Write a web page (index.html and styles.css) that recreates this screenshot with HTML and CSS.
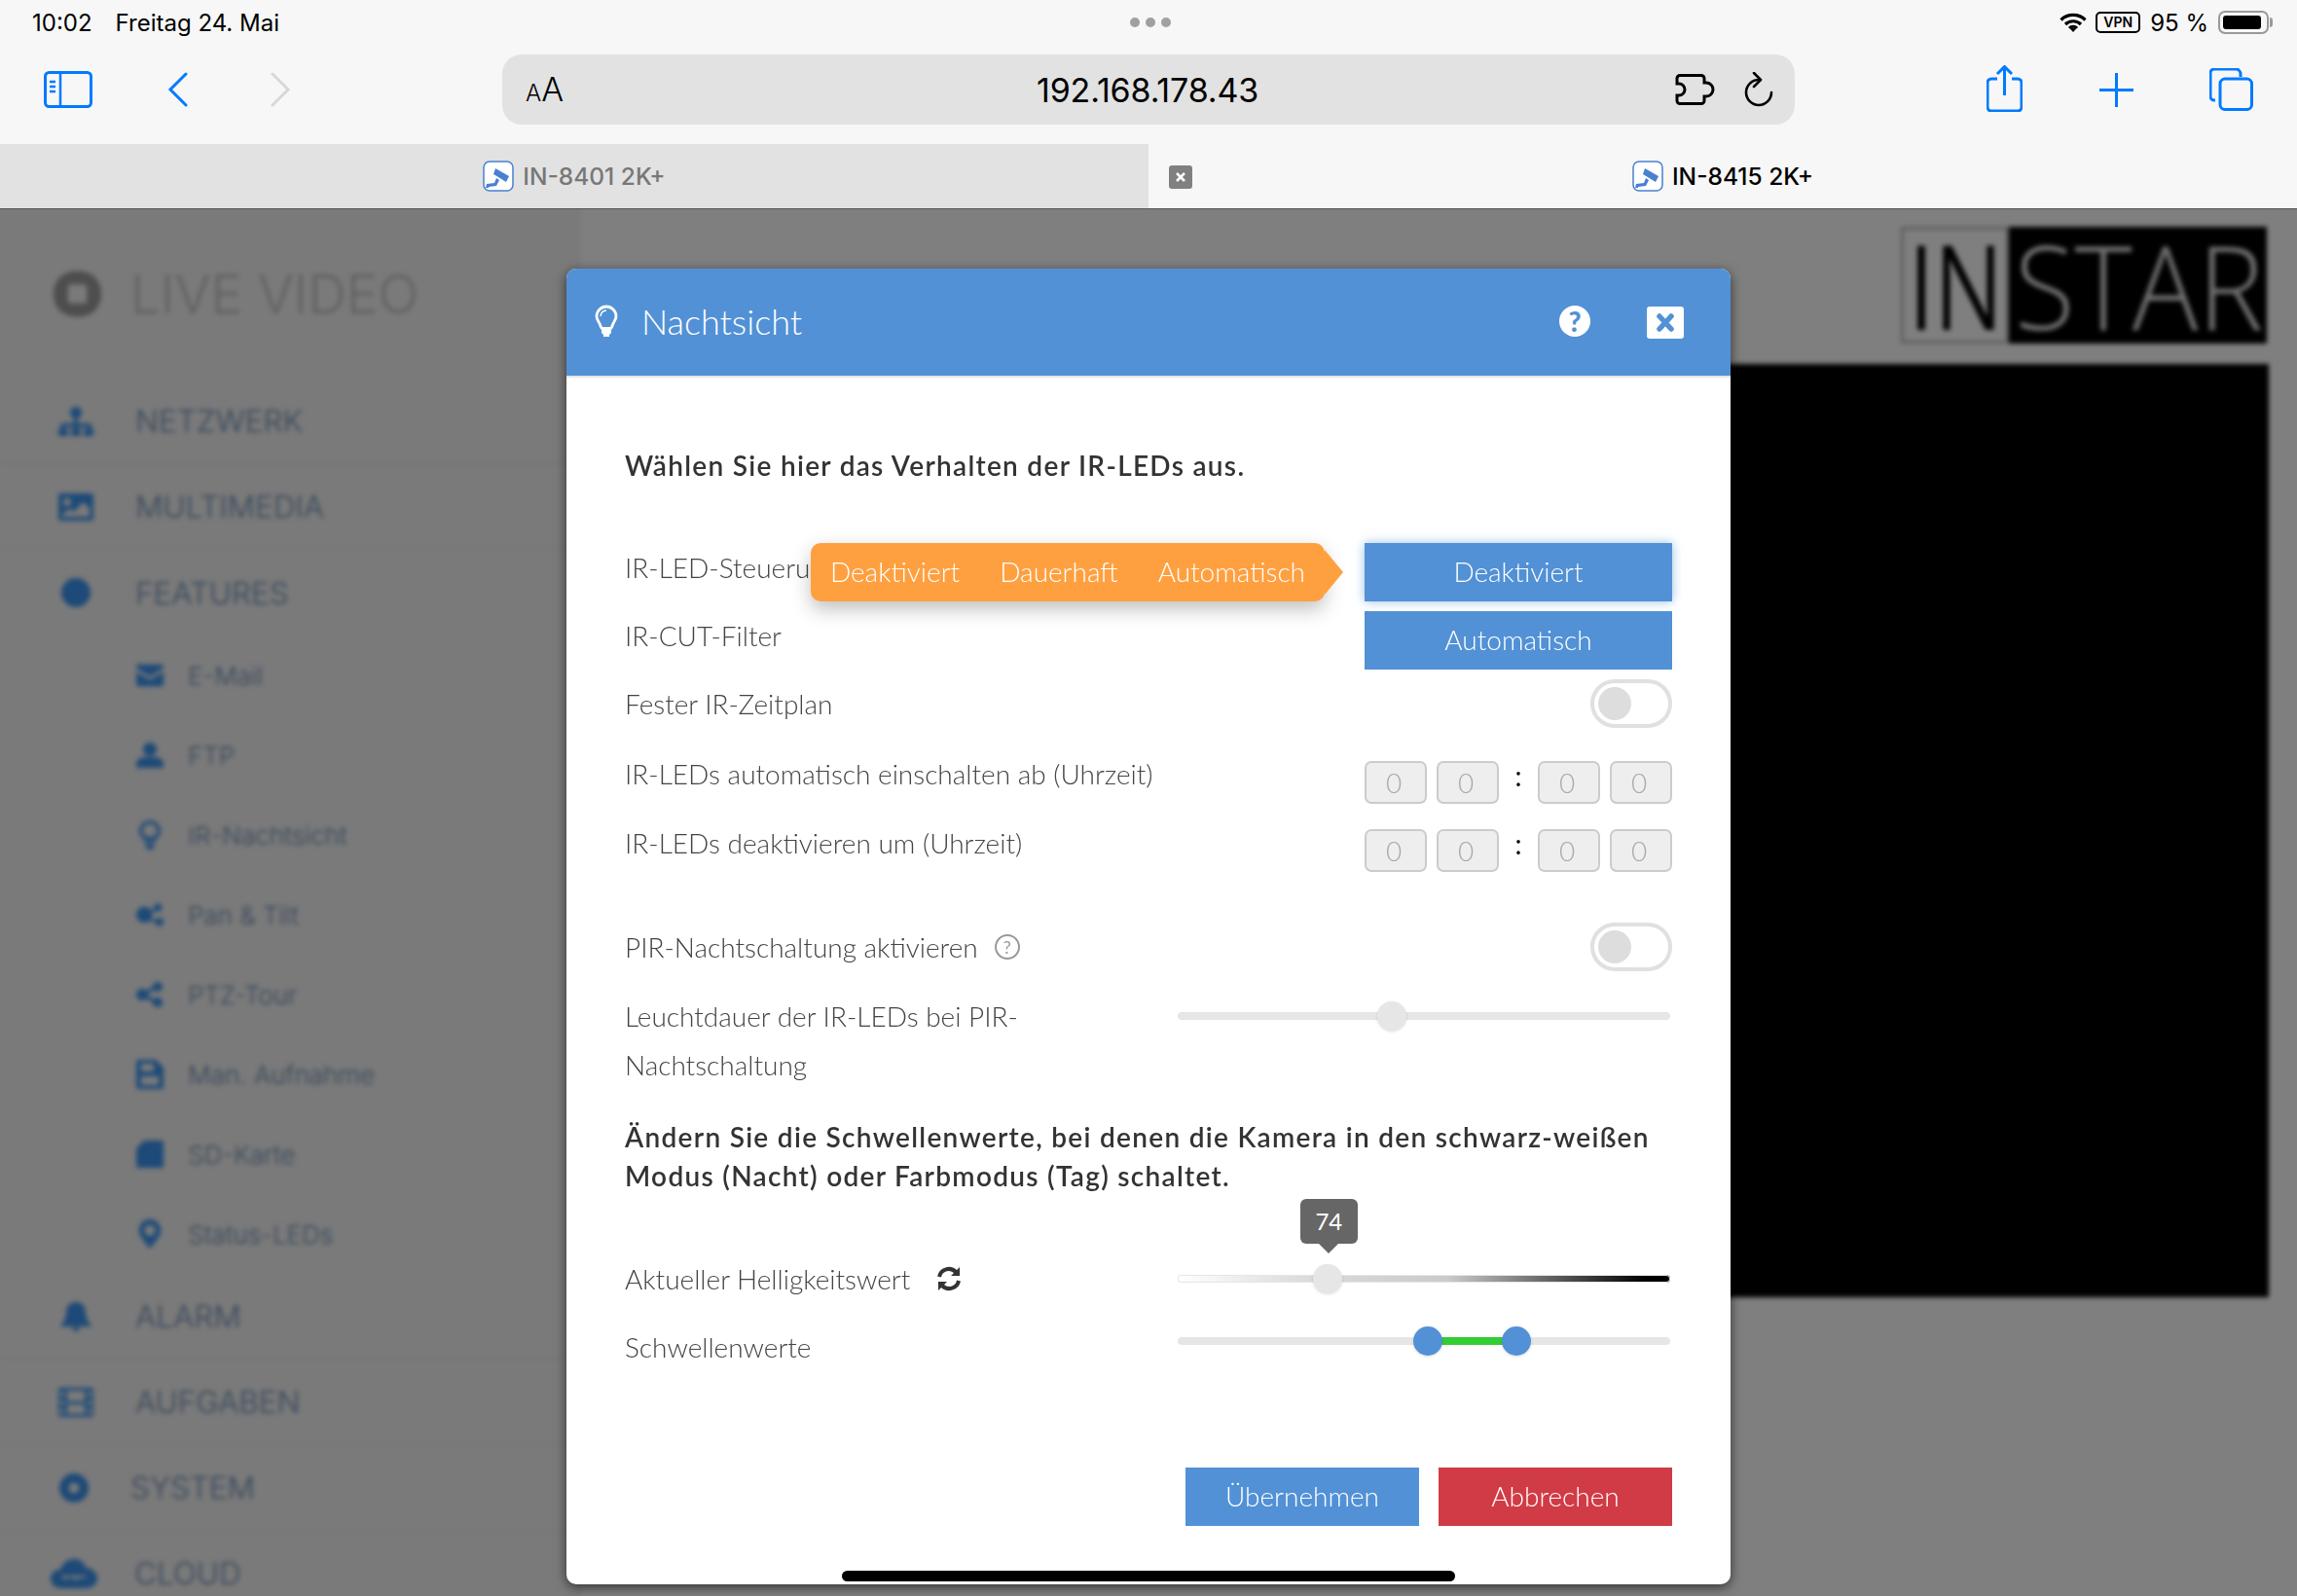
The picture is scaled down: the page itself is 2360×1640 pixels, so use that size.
FILE: index.html
```html
<!DOCTYPE html>
<html lang="de">
<head>
  <meta charset="UTF-8" />
  <title>Nachtsicht</title>
  <link rel="stylesheet" href="styles.css">
</head>
<body>
  <!-- Safari chrome -->
  <header class="chrome">
    <div class="statusbar">
      <div class="status-left"><span>10:02</span><span>Freitag 24. Mai</span></div>
      <div class="dots"><i></i><i></i><i></i></div>
      <div class="status-right">
        <svg class="wifi" viewBox="0 0 28 20"><path d="M1.5 7.5a18 18 0 0 1 25 0M6 12a11.500 11.500 0 0 1 16 0M10 16a5.500 5.500 0 0 1 8 0" fill="none" stroke="#000" stroke-width="3.200"/><path d="M14 20l-3-3.200a4.500 4.500 0 0 1 6 0z"/></svg>
        <span class="vpn">VPN</span>
        <span class="battery-text">95 %</span>
        <span class="battery"><i></i></span>
      </div>
    </div>
    <div class="toolbar">
      <div class="tool-left">
        <svg class="ic-sidebar" viewBox="0 0 50 38"><rect x="1.500" y="1.500" width="47" height="35" rx="4" fill="none" stroke="#007aff" stroke-width="3"/><path d="M17 2v34" stroke="#007aff" stroke-width="2.500"/><path d="M6 11h6M6 16h6M6 21h6" stroke="#007aff" stroke-width="2.500"/></svg>
        <svg class="ic-chev" viewBox="0 0 21 36"><path d="M19 2L3 18l16 16" fill="none" stroke="#007aff" stroke-width="3" stroke-linecap="round"/></svg>
        <svg class="ic-chev ic-next" viewBox="0 0 21 36"><path d="M2 2l16 16L2 34" fill="none" stroke="#d8d8d8" stroke-width="3" stroke-linecap="round"/></svg>
      </div>
      <div class="addressbar">
        <span class="aa"><small>A</small>A</span>
        <span class="url">192.168.178.43</span>
        <svg class="ic-puzzle" viewBox="0 0 41 32"><path d="M5 1.500H27a3 3 0 0 1 3 3V9h2a7 7 0 0 1 0 14h-2v4.500a3 3 0 0 1-3 3H5a3 3 0 0 1-3-3V22h2a6 6 0 0 0 0-12H2V4.500a3 3 0 0 1 3-3z" fill="none" stroke="#000" stroke-width="3"/></svg>
        <svg class="ic-reload" viewBox="0 0 30 36"><path d="M15 8A13 13 0 1 0 28 21" fill="none" stroke="#000" stroke-width="2.600" stroke-linecap="round"/><path d="M10 1l7 7-7 7" fill="none" stroke="#000" stroke-width="2.600" stroke-linecap="round" stroke-linejoin="round"/></svg>
      </div>
      <div class="tool-right">
        <svg class="ic-share" viewBox="0 0 37 48"><path d="M11 14H5a4 4 0 0 0-4 4v25a4 4 0 0 0 4 4h27a4 4 0 0 0 4-4V18a4 4 0 0 0-4-4h-6M18.500 31V2M11 9l7.500-7.500L26 9" fill="none" stroke="#007aff" stroke-width="3"/></svg>
        <svg class="ic-plus" viewBox="0 0 35 35"><path d="M17.500 0v35M0 17.500h35" stroke="#007aff" stroke-width="3"/></svg>
        <svg class="ic-tabs" viewBox="0 0 45 44"><path d="M6 33H5a4 4 0 0 1-4-4V5a4 4 0 0 1 4-4h22a5 5 0 0 1 5 5v3" fill="none" stroke="#007aff" stroke-width="3"/><rect x="11" y="11" width="32.500" height="31.500" rx="5" fill="none" stroke="#007aff" stroke-width="3"/></svg>
      </div>
    </div>
    <div class="tabs">
      <div class="tab tab-off">
        <svg class="favicon" viewBox="0 0 32 32"><rect x="1" y="1" width="30" height="30" rx="6" fill="#fff" stroke="#4a80d0" stroke-width="1.500"/><path d="M13 8l14 8-3 6-13-8zM4 24l8-1 2-5 3 2-3 6-8 1v1H3z" fill="#4a80d0"/></svg>
        <span>IN-8401 2K+</span>
      </div>
      <div class="tab tab-on">
        <span class="tab-close"><svg viewBox="0 0 24 24"><path d="M8 8l8 8M16 8l-8 8" stroke="#fff" stroke-width="2.500"/></svg></span>
        <svg class="favicon" viewBox="0 0 32 32"><rect x="1" y="1" width="30" height="30" rx="6" fill="#fff" stroke="#4a80d0" stroke-width="1.500"/><path d="M13 8l14 8-3 6-13-8zM4 24l8-1 2-5 3 2-3 6-8 1v1H3z" fill="#4a80d0"/></svg>
        <span>IN-8415 2K+</span>
      </div>
    </div>
  </header>

  <main class="page">
    <!-- Seite hinter dem Dialog -->
    <nav class="sidebar">
      <div class="side-title">
        <svg viewBox="0 0 50 48"><path fill-rule="evenodd" d="M25 0c16 0 25 10 25 24s-9 24-25 24S0 38 0 24 9 0 25 0zM19 14a4 4 0 0 0-4 4v12a4 4 0 0 0 4 4h12a4 4 0 0 0 4-4V18a4 4 0 0 0-4-4z" fill="#9c9c9c"/></svg>
        <span>LIVE VIDEO</span>
      </div>
      <ul class="side-list">
        <li class="side-item"><svg viewBox="0 0 36 30"><circle cx="18" cy="6" r="6"/><path d="M16 10h4v7h11a3 3 0 0 1 3 3v3h2v7H26v-7h4v-2H20v2h3v7H13v-7h3v-2H6v2h4v7H0v-7h2v-3a3 3 0 0 1 3-3h11z"/></svg><span>NETZWERK</span></li>
        <li class="side-item"><svg viewBox="0 0 36 28"><path fill-rule="evenodd" d="M2 0h32a2 2 0 0 1 2 2v24a2 2 0 0 1-2 2H2a2 2 0 0 1-2-2V2a2 2 0 0 1 2-2zM9 5a4 4 0 1 0 0 8 4 4 0 0 0 0-8zM4 24h28V15l-7-6-9 10-4-3-8 5z"/></svg><span>MULTIMEDIA</span></li>
        <li class="side-item"><svg viewBox="0 0 28 28"><circle cx="14" cy="14" r="14"/></svg><span>FEATURES</span></li>
      </ul>
      <ul class="side-sub">
        <li class="sub-item"><svg viewBox="0 0 30 24"><path d="M2 0h26a2 2 0 0 1 2 2v2L15 13 0 4V2a2 2 0 0 1 2-2zM0 8l15 9 15-9v14a2 2 0 0 1-2 2H2a2 2 0 0 1-2-2z"/></svg><span>E-Mail</span></li>
        <li class="sub-item"><svg viewBox="0 0 28 26"><circle cx="14" cy="7" r="7"/><path d="M0 26v-4c0-5 5-7 9-7h10c4 0 9 2 9 7v4z"/></svg><span>FTP</span></li>
        <li class="sub-item"><svg viewBox="0 0 24 34"><path d="M12 0a12 12 0 0 1 7 22v3H5v-3A12 12 0 0 1 12 0zm0 4a8 8 0 0 0-4 15h8a8 8 0 0 0-4-15zM6 27h12l-3 7H9z"/></svg><span>IR-Nachtsicht</span></li>
        <li class="sub-item"><svg viewBox="0 0 34 28"><circle cx="10" cy="14" r="10"/><circle cx="27" cy="5" r="5"/><circle cx="29" cy="23" r="5"/><path d="M12 12l14-8 2 3-14 8zM12 16l15 6-2 3-14-6z"/></svg><span>Pan &amp; Tilt</span></li>
        <li class="sub-item"><svg viewBox="0 0 28 26"><circle cx="6" cy="13" r="6"/><circle cx="22" cy="5" r="5"/><circle cx="22" cy="21" r="5"/><path d="M6 11L21 3l2 3L8 14zM8 12l15 8-2 3L6 15z"/></svg><span>PTZ-Tour</span></li>
        <li class="sub-item"><svg viewBox="0 0 28 30"><path fill-rule="evenodd" d="M2 0h18l8 8v20a2 2 0 0 1-2 2H2a2 2 0 0 1-2-2V2a2 2 0 0 1 2-2zM5 4v8h13V4zM5 17v9h18v-9z"/></svg><span>Man. Aufnahme</span></li>
        <li class="sub-item"><svg viewBox="0 0 28 28"><path d="M8 0h18a2 2 0 0 1 2 2v24a2 2 0 0 1-2 2H2a2 2 0 0 1-2-2V8z"/></svg><span>SD-Karte</span></li>
        <li class="sub-item"><svg viewBox="0 0 24 32"><path fill-rule="evenodd" d="M12 0a12 12 0 0 1 12 12c0 7-12 20-12 20S0 19 0 12A12 12 0 0 1 12 0zm0 6a6 6 0 1 0 0 12 6 6 0 0 0 0-12z"/></svg><span>Status-LEDs</span></li>
      </ul>
      <ul class="side-list">
        <li class="side-item"><svg viewBox="0 0 32 30"><path d="M16 0c7 0 10 5 10 11 0 7 4 10 6 14H0c2-4 6-7 6-14C6 5 9 0 16 0zM12 26h8a4 4 0 0 1-8 0z"/></svg><span>ALARM</span></li>
        <li class="side-item"><svg viewBox="0 0 36 30"><path fill-rule="evenodd" d="M2 0h32a2 2 0 0 1 2 2v26a2 2 0 0 1-2 2H2a2 2 0 0 1-2-2V2a2 2 0 0 1 2-2zM9 3v11h18V3zM9 17v10h18V17zM2 4v5h4V4zm28 0v5h4V4zM2 13v5h4v-5zm28 0v5h4v-5zM2 22v5h4v-5zm28 0v5h4v-5z"/></svg><span>AUFGABEN</span></li>
        <li class="side-item side-item-system"><svg viewBox="0 0 28 28"><path fill-rule="evenodd" d="M14 0a14 14 0 1 1 0 28 14 14 0 0 1 0-28zm0 9a5 5 0 1 0 0 10 5 5 0 0 0 0-10z"/></svg><span>SYSTEM</span></li>
        <li class="side-item side-item-cloud"><svg viewBox="0 0 48 30"><path fill-rule="evenodd" d="M24 0c7 0 11 4 12 9 7 0 12 5 12 11s-5 10-12 10H11C5 30 0 26 0 20s5-9 10-9c2-6 7-11 14-11zM12 20c3 2 6 0 8-2 3 4 8 4 10 1 3 2 6 0 7-2H12z"/></svg><span>CLOUD</span></li>
      </ul>
    </nav>
    <section class="content">
      <div class="logo"><div class="logo-in"><span>IN</span></div><div class="logo-star"><span>STAR</span></div></div>
      <div class="video"></div>
    </section>

    <div class="overlay"></div>

    <!-- Dialog -->
    <div class="modal">
      <div class="modal-head">
        <svg class="ic-bulb" viewBox="0 0 24 34"><path d="M12 2a10 10 0 0 1 10 10c0 4-3 6-4 10-.5 1.500-1 2.500-2 2.500H8c-1 0-1.500-1-2-2.500-1-4-4-6-4-10A10 10 0 0 1 12 2z" fill="none" stroke="#fff" stroke-width="2.800"/><path d="M7 26h10v3l-2 2v2H9v-2l-2-2z" fill="#fff"/><path d="M12 6a6 6 0 0 0-6 6" fill="none" stroke="#fff" stroke-width="1.500"/></svg>
        <h2 class="modal-title">Nachtsicht</h2>
        <span class="head-help">?</span>
        <span class="head-close"><svg viewBox="0 0 38 33"><path d="M13 10l12 13M25 10L13 23" stroke="#5291d6" stroke-width="5.500" stroke-linecap="round"/></svg></span>
      </div>
      <div class="modal-body">
        <p class="intro">Wählen Sie hier das Verhalten der IR-LEDs aus.</p>

        <div class="row row-first">
          <label>IR-LED-Steueru</label>
          <button class="btn-select btn-glow">Deaktiviert</button>
          <div class="popover"><span>Deaktiviert</span><span>Dauerhaft</span><span>Automatisch</span></div>
        </div>
        <div class="row row-tight">
          <label>IR-CUT-Filter</label>
          <button class="btn-select">Automatisch</button>
        </div>
        <div class="row row-tight">
          <label>Fester IR-Zeitplan</label>
          <span class="toggle"></span>
        </div>
        <div class="row row-time1">
          <label>IR-LEDs automatisch einschalten ab (Uhrzeit)</label>
          <div class="time"><span>0</span><span>0</span><b>:</b><span>0</span><span>0</span></div>
        </div>
        <div class="row row-time2">
          <label>IR-LEDs deaktivieren um (Uhrzeit)</label>
          <div class="time"><span>0</span><span>0</span><b>:</b><span>0</span><span>0</span></div>
        </div>
        <div class="row row-pir">
          <label class="label-icon">PIR-Nachtschaltung aktivieren <span class="hint">?</span></label>
          <span class="toggle"></span>
        </div>
        <div class="row row-slider">
          <label class="label-wrap">Leuchtdauer der IR-LEDs bei PIR-Nachtschaltung</label>
          <div class="slider"><div class="track"></div><i class="knob" style="left: 43.5%"></i></div>
        </div>

        <p class="intro intro-two">Ändern Sie die Schwellenwerte, bei denen die Kamera in den schwarz-weißen Modus (Nacht) oder Farbmodus (Tag) schaltet.</p>

        <div class="row row-bright">
          <label class="label-icon">Aktueller Helligkeitswert
            <svg class="ic-refresh" viewBox="0 0 26 26"><path d="M3 11A10 10 0 0 1 20 6M23 15A10 10 0 0 1 6 20" fill="none" stroke="#333" stroke-width="4"/><path d="M24 1v9h-9zM2 25v-9h9z" fill="#333"/></svg>
          </label>
          <div class="slider">
            <div class="track track-grad"></div>
            <i class="knob" style="left: 30.400%"></i>
            <div class="value-tip" style="left: 30.800%">74</div>
          </div>
        </div>
        <div class="row row-thresh">
          <label>Schwellenwerte</label>
          <div class="slider slider-short">
            <div class="track"></div>
            <div class="range" style="left: 50.800%; width: 17.900%"></div>
            <i class="knob knob-blue" style="left: 50.800%"></i>
            <i class="knob knob-blue" style="left: 68.700%"></i>
          </div>
        </div>

        <div class="modal-foot">
          <button class="btn btn-apply">Übernehmen</button>
          <button class="btn btn-cancel">Abbrechen</button>
        </div>
      </div>
    </div>
    <div class="home-bar"></div>
  </main>
</body>
</html>
```
FILE: styles.css
```css
* {
  box-sizing: border-box;
}

html, body {
  margin: 0;
  height: 1640px;
  overflow: hidden;
}

body {
  font-family: "Inter", "Liberation Sans", sans-serif;
  background-color: #fff;
  display: flex;
  flex-direction: column;
}

svg {
  display: block;
}

ul {
  list-style: none;
  margin: 0;
  padding: 0;
}

/* browser chrome */
.chrome {
  height: 214px;
  background-color: #f7f7f7;
  flex-shrink: 0;
}

.statusbar {
  height: 46px;
  padding: 0 29px 0 33px;
  display: flex;
  align-items: center;
  justify-content: space-between;
  font-size: 24px;
  color: #000;
}

.status-left {
  display: flex;
  gap: 24px;
  width: 400px;
}

.dots {
  display: flex;
  gap: 6px;
}

.dots i {
  width: 10px;
  height: 10px;
  border-radius: 50%;
  background-color: #a0a0a0;
}

.status-right {
  width: 400px;
  display: flex;
  justify-content: flex-end;
  align-items: center;
}

.wifi {
  width: 28px;
  height: 20px;
  margin-right: 9px;
}

.vpn {
  width: 46px;
  height: 22px;
  border: 2px solid #000;
  border-radius: 5px;
  font-size: 14px;
  font-weight: 600;
  line-height: 18px;
  text-align: center;
  margin-right: 10px;
}

.battery-text {
  margin-right: 10px;
}

.battery {
  width: 52px;
  height: 24px;
  border: 2px solid #999;
  border-radius: 7px;
  padding: 3px;
  position: relative;
}

.battery i {
  display: block;
  height: 100%;
  width: 92%;
  background-color: #000;
  border-radius: 3px;
}

.battery::after {
  content: "";
  position: absolute;
  right: -6px;
  top: 5px;
  width: 3px;
  height: 10px;
  background-color: #999;
  border-radius: 0 3px 3px 0;
}

.toolbar {
  height: 102px;
  display: flex;
  align-items: flex-start;
  padding-top: 10px;
}

.tool-left {
  width: 516px;
  padding: 17px 0 0 45px;
  display: flex;
  align-items: center;
}

.ic-sidebar {
  width: 50px;
  height: 38px;
}

.ic-chev {
  width: 21px;
  height: 36px;
  margin-left: 77px;
}

.ic-next {
  margin-left: 85px;
}

.addressbar {
  width: 1328px;
  height: 72px;
  background-color: #e2e2e2;
  border-radius: 20px;
  display: flex;
  align-items: center;
  padding: 0 22px 0 24px;
  position: relative;
}

.aa {
  font-size: 34px;
  color: #000;
  line-height: 1;
  font-weight: 300;
}

.aa small {
  font-size: 24px;
}

.url {
  position: absolute;
  left: 549px;
  font-size: 34px;
  letter-spacing: -0.15px;
  font-weight: 400;
  color: #000;
}

.ic-puzzle {
  width: 41px;
  height: 32px;
  margin-left: auto;
}

.ic-reload {
  width: 30px;
  height: 36px;
  margin-left: 30px;
}

.tool-right {
  flex: 1;
  padding: 11px 0 0 197px;
  display: flex;
  align-items: flex-start;
}

.ic-share {
  width: 37px;
  height: 48px;
}

.ic-plus {
  width: 35px;
  height: 35px;
  margin: 8px 0 0 79px;
}

.ic-tabs {
  width: 45px;
  height: 44px;
  margin: 3px 0 0 78px;
}

.tabs {
  height: 66px;
  display: flex;
}

.tab {
  width: 1180px;
  display: flex;
  align-items: center;
  justify-content: center;
  gap: 9px;
  font-size: 24.500px;
  font-weight: 500;
  position: relative;
}

.tab-off {
  background-color: #e2e2e2;
  color: #777;
}

.tab-on {
  color: #000;
}

.favicon {
  width: 32px;
  height: 32px;
}

.tab-close {
  position: absolute;
  left: 21px;
  top: 22px;
  width: 24px;
  height: 24px;
  background-color: #808080;
  border-radius: 3px;
}

/* page behind */
.page {
  flex: 1;
  position: relative;
  display: flex;
  border-top: 1px solid #555;
}

.sidebar {
  width: 597px;
  background-color: #f4f4f4;
  font-family: "Inter", "Open Sans", sans-serif;
  color: #6f90b8;
  font-weight: 300;
}

.side-title {
  height: 174px;
  padding: 57px 0 0 55px;
  display: flex;
  align-items: flex-start;
  gap: 30px;
  font-size: 55px;
  font-weight: 300;
  color: #c4c4c4;
  line-height: 60px;
  white-space: nowrap;
}

.side-title svg {
  width: 49px;
  height: 48px;
  margin-top: 6px;
}

.side-item {
  height: 88px;
  display: flex;
  align-items: center;
  font-size: 31.500px;
  border-bottom: 1px solid #e8e8e8;
}

.side-item svg {
  width: 36px;
  height: 30px;
  fill: #3a94f0;
  margin: 0 43px 0 60px;
}

.side-list li:nth-child(3) {
  border-bottom: 0;
}

.side-sub + .side-list li:nth-child(3) {
  border-bottom: 1px solid #e8e8e8;
}

.side-item-system svg {
  margin: 0 40px 0 58px;
}

.side-item-cloud svg {
  width: 48px;
  margin: 0 38px 0 52px;
}

.sub-item {
  height: 82px;
  display: flex;
  align-items: center;
  font-size: 26px;
  padding-left: 140px;
}

.sub-item svg {
  width: 28px;
  height: 30px;
  fill: #3a94f0;
  margin-right: 25px;
}

.content {
  flex: 1;
  display: flex;
  flex-direction: column;
  align-items: flex-end;
  padding: 18px 29px 0 0;
}

.logo {
  display: flex;
  height: 120px;
  margin-right: 2px;
  font-family: "Open Sans", sans-serif;
  font-size: 120px;
  line-height: 120px;
}

.logo span {
  display: inline-block;
  transform-origin: left center;
  white-space: nowrap;
}

.logo-in {
  width: 111px;
  background-color: #fff;
  border: 3px solid #bbb;
  color: #000;
  line-height: 114px;
  padding-left: 5px;
  font-weight: 500;
}

.logo-in span {
  transform: scaleX(0.78);
}

.logo-star {
  width: 265px;
  background-color: #000;
  color: #e0e0e0;
  font-weight: 300;
  padding-left: 6px;
}

.logo-star span {
  transform: scaleX(0.94);
}

.video {
  width: 1500px;
  height: 959px;
  margin-top: 21px;
  background-color: #000;
}

.overlay {
  position: absolute;
  inset: 0;
  background-color: rgba(0, 0, 0, 0.5);
  backdrop-filter: blur(2.500px);
}

/* dialog */
.modal {
  position: absolute;
  left: 582px;
  top: 61px;
  width: 1196px;
  background-color: #fff;
  border-radius: 10px;
  box-shadow: 0 3px 12px rgba(0, 0, 0, 0.6);
  font-family: "Lato", "Liberation Sans", sans-serif;
  font-weight: 300;
  font-size: 28px;
  color: #444;
}

.modal-head {
  height: 112px;
  background-color: #5291d6;
  border-bottom: 2px solid #e5e5e5;
  border-radius: 10px 10px 0 0;
  display: flex;
  align-items: center;
  padding: 0 48px 0 29px;
  color: #fff;
}

.ic-bulb {
  width: 24px;
  height: 34px;
  margin-top: -2px;
}

.modal-title {
  margin: -2px 0 0 24px;
  font-size: 36px;
  font-weight: 300;
  flex: 1;
}

.head-help {
  width: 32px;
  height: 32px;
  border-radius: 50%;
  background-color: #fff;
  color: #5291d6;
  font-size: 28px;
  font-weight: 900;
  line-height: 32px;
  text-align: center;
  margin-right: 58px;
  margin-top: -2px;
}

.head-close {
  width: 38px;
  height: 33px;
  background-color: #fff;
  border-radius: 3px;
}

.modal-body {
  padding: 70px 60px 60px;
}

.intro {
  margin: 0;
  line-height: 40px;
  font-weight: 600;
  color: #333;
  letter-spacing: 1.300px;
}

.row {
  display: flex;
  justify-content: space-between;
  align-items: flex-start;
  position: relative;
}

.row label {
  line-height: 50px;
  white-space: nowrap;
}

.row-first {
  margin-top: 60px;
}

.row-tight {
  margin-top: 10px;
}

.row-time1 {
  margin-top: 22px;
}

.row-time2 {
  margin-top: 15px;
}

.row-pir {
  margin-top: 52px;
}

.row-slider {
  margin-top: 21px;
}

.intro-two {
  margin-top: 29px;
}

.row-bright {
  margin-top: 61px;
}

.row-thresh {
  margin-top: 20px;
}

.row .label-wrap {
  white-space: normal;
  width: 420px;
}

.label-icon {
  display: flex;
  align-items: center;
}

.btn-select {
  width: 316px;
  height: 60px;
  border: 0;
  background-color: #5291d6;
  color: #fff;
  font: inherit;
  padding: 0 0 2px;
}

.btn-glow {
  box-shadow: 0 0 10px rgba(82, 145, 214, 0.6);
}

.popover {
  position: absolute;
  right: 357px;
  top: 0;
  height: 60px;
  padding: 0 20px 2px 20px;
  display: flex;
  align-items: center;
  gap: 41px;
  background-color: #ffa040;
  color: #fff;
  border-radius: 10px;
  box-shadow: 0 8px 20px rgba(0, 0, 0, 0.25);
}

.popover::after {
  content: "";
  position: absolute;
  left: 100%;
  top: 7px;
  border-style: solid;
  border-width: 23px 0 23px 19px;
  border-color: transparent transparent transparent #ffa040;
}

.toggle {
  width: 84px;
  height: 50px;
  border: 4px solid #e0e0e0;
  border-radius: 25px;
  padding: 4px;
}

.toggle::before {
  content: "";
  display: block;
  width: 34px;
  height: 34px;
  border-radius: 50%;
  background-color: #ddd;
}

.time {
  width: 316px;
  margin-top: 11px;
  display: flex;
  gap: 10px;
}

.row-time1 .time {
  margin-top: 12px;
}

.time span {
  width: 64px;
  height: 44px;
  background-color: #eee;
  border: 2px solid #ccc;
  border-radius: 7px;
  color: #aaa;
  line-height: 40px;
  padding-left: 20px;
}

.time b {
  width: 20px;
  font-weight: 400;
  color: #000;
  line-height: 30px;
  text-align: center;
}

.hint {
  width: 26px;
  height: 26px;
  border: 2px solid #999;
  border-radius: 50%;
  color: #999;
  font-size: 18px;
  line-height: 22px;
  text-align: center;
  font-weight: 400;
  margin-left: 17px;
}

.ic-refresh {
  width: 26px;
  height: 26px;
  margin-left: 27px;
}

.slider {
  width: 506px;
  height: 50px;
  margin-right: 2px;
  position: relative;
  display: flex;
  align-items: center;
}

.slider-short {
  height: 38px;
}

.track {
  width: 100%;
  height: 8px;
  background-color: #e6e6e6;
  border-radius: 4px;
}

.track-grad {
  background: linear-gradient(to right, #fff 0%, #dcdcdc 25%, #cacaca 55%, #000 95%);
  box-shadow: inset 0 0 0 1px #e6e6e6;
}

.knob {
  position: absolute;
  top: 50%;
  width: 30px;
  height: 30px;
  margin: -15px 0 0 -15px;
  border-radius: 50%;
  background-color: #e6e6e6;
  box-shadow: 0 1px 3px rgba(0, 0, 0, 0.15);
}

.knob-blue {
  background-color: #5291d6;
}

.range {
  position: absolute;
  top: 50%;
  height: 8px;
  margin-top: -4px;
  background-color: #32cd32;
}

.value-tip {
  position: absolute;
  top: -57px;
  width: 59px;
  height: 46px;
  margin-left: -30px;
  background-color: #666;
  color: #fff;
  border-radius: 6px;
  font-size: 24px;
  font-weight: 400;
  line-height: 46px;
  text-align: center;
}

.value-tip::after {
  content: "";
  position: absolute;
  left: 50%;
  top: 100%;
  margin-left: -10px;
  border-style: solid;
  border-width: 10px 10px 0;
  border-color: #666 transparent transparent;
}

.modal-foot {
  margin-top: 99px;
  display: flex;
  justify-content: flex-end;
  gap: 20px;
}

.btn {
  width: 240px;
  height: 60px;
  border: 0;
  color: #fff;
  font: inherit;
  padding: 0 0 2px;
}

.btn-apply {
  background-color: #5291d6;
}

.btn-cancel {
  background-color: #d13b45;
}

.home-bar {
  position: absolute;
  left: 865px;
  top: 1399px;
  width: 630px;
  height: 11px;
  background-color: #000;
  border-radius: 6px;
}
```
